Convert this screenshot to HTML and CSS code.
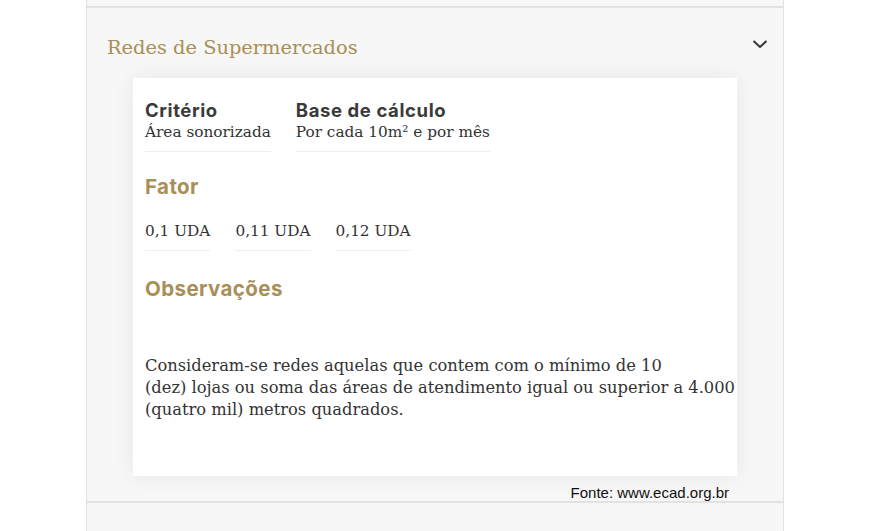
FILE: index.html
```html
<!DOCTYPE html>
<html lang="pt-BR">

<head>
    <meta charset="UTF-8" />
    <meta name="viewport" content="width=device-width" />
    <title>Redes de Supermercados</title>
    <link rel="stylesheet" href="styles.css">
</head>

<body>
    <div class="accordion">
        <div class="item item-prev"></div>

        <div class="item item-open">
            <div class="item-header">
                <h2>Redes de Supermercados</h2>
                <svg class="chevron" width="16" height="10" viewBox="0 0 16 10">
                    <polyline points="1.5,2 8,8 14.5,2" fill="none" stroke="#333" stroke-width="2" />
                </svg>
            </div>

            <div class="card">
                <div class="row">
                    <div class="cell">
                        <div class="label">Critério</div>
                        <div class="value">Área sonorizada</div>
                    </div>
                    <div class="cell">
                        <div class="label">Base de cálculo</div>
                        <div class="value">Por cada 10m² e por mês</div>
                    </div>
                </div>

                <h3 class="fator">Fator</h3>
                <div class="row">
                    <div class="cell"><div class="value">0,1 UDA</div></div>
                    <div class="cell"><div class="value">0,11 UDA</div></div>
                    <div class="cell"><div class="value">0,12 UDA</div></div>
                </div>

                <h3 class="notes">Observações</h3>
                <p class="obs">
                    Consideram-se redes aquelas que contem com o mínimo de 10<br>
                    (dez) lojas ou soma das áreas de atendimento igual ou superior a 4.000<br>
                    (quatro mil) metros quadrados.
                </p>
            </div>

            <div class="source">Fonte: www.ecad.org.br</div>
        </div>

        <div class="item item-next"></div>
    </div>
</body>

</html>
```

FILE: styles.css
```css
body {
    margin: 0;
    background: white;
    font-family: "DejaVu Serif", Georgia, serif;
    color: #333;
}

.accordion {
    margin-left: 86px;
    width: 696px;
    border-left: 1px solid #e2e2e2;
    border-right: 1px solid #e2e2e2;
}

.item {
    background: #f7f7f7;
}

.item-prev {
    height: 6px;
    border-bottom: 2px solid #e2e2e2;
}

.item-open {
    border-bottom: 2px solid #e2e2e2;
}

.item-next {
    height: 40px;
}

.item-header {
    display: flex;
    align-items: center;
    justify-content: space-between;
    padding: 8px 15px 0 20px;
    height: 62px;
}

.item-header h2 {
    margin: 0;
    font-weight: normal;
    font-size: 19.4px;
    color: #a88f57;
}

.chevron {
    display: block;
    margin-top: -7px;
}

.card {
    margin: 0 46px;
    background: white;
    padding: 21px 12px 55px;
    box-shadow: 0 0 22px rgba(0, 0, 0, 0.07);
}

.row {
    display: flex;
    gap: 25px;
}

.cell {
    border-bottom: 1px solid #eee;
    padding-bottom: 8px;
}

.label {
    font-family: Inter, "Open Sans", sans-serif;
    font-weight: 700;
    font-size: 18.5px;
    letter-spacing: 0.6px;
    line-height: 22px;
    color: #3a3a3a;
}

.value {
    font-size: 15.3px;
    line-height: 22px;
}

h3 {
    font-family: Inter, "Open Sans", sans-serif;
    font-weight: 700;
    font-size: 20.5px;
    letter-spacing: 0.4px;
    line-height: 24px;
    color: #a88f57;
}

.fator {
    margin: 23px 0 21px;
}

.notes {
    margin: 26px 0 0;
}

.obs {
    margin: 54px 0 0;
    font-size: 16.3px;
    line-height: 22px;
    white-space: nowrap;
}

.source {
    text-align: right;
    padding: 9px 54px 0 0;
    height: 16px;
    font-family: "Liberation Sans", Arial, sans-serif;
    font-size: 15px;
    line-height: 16px;
    color: #111;
}
```
